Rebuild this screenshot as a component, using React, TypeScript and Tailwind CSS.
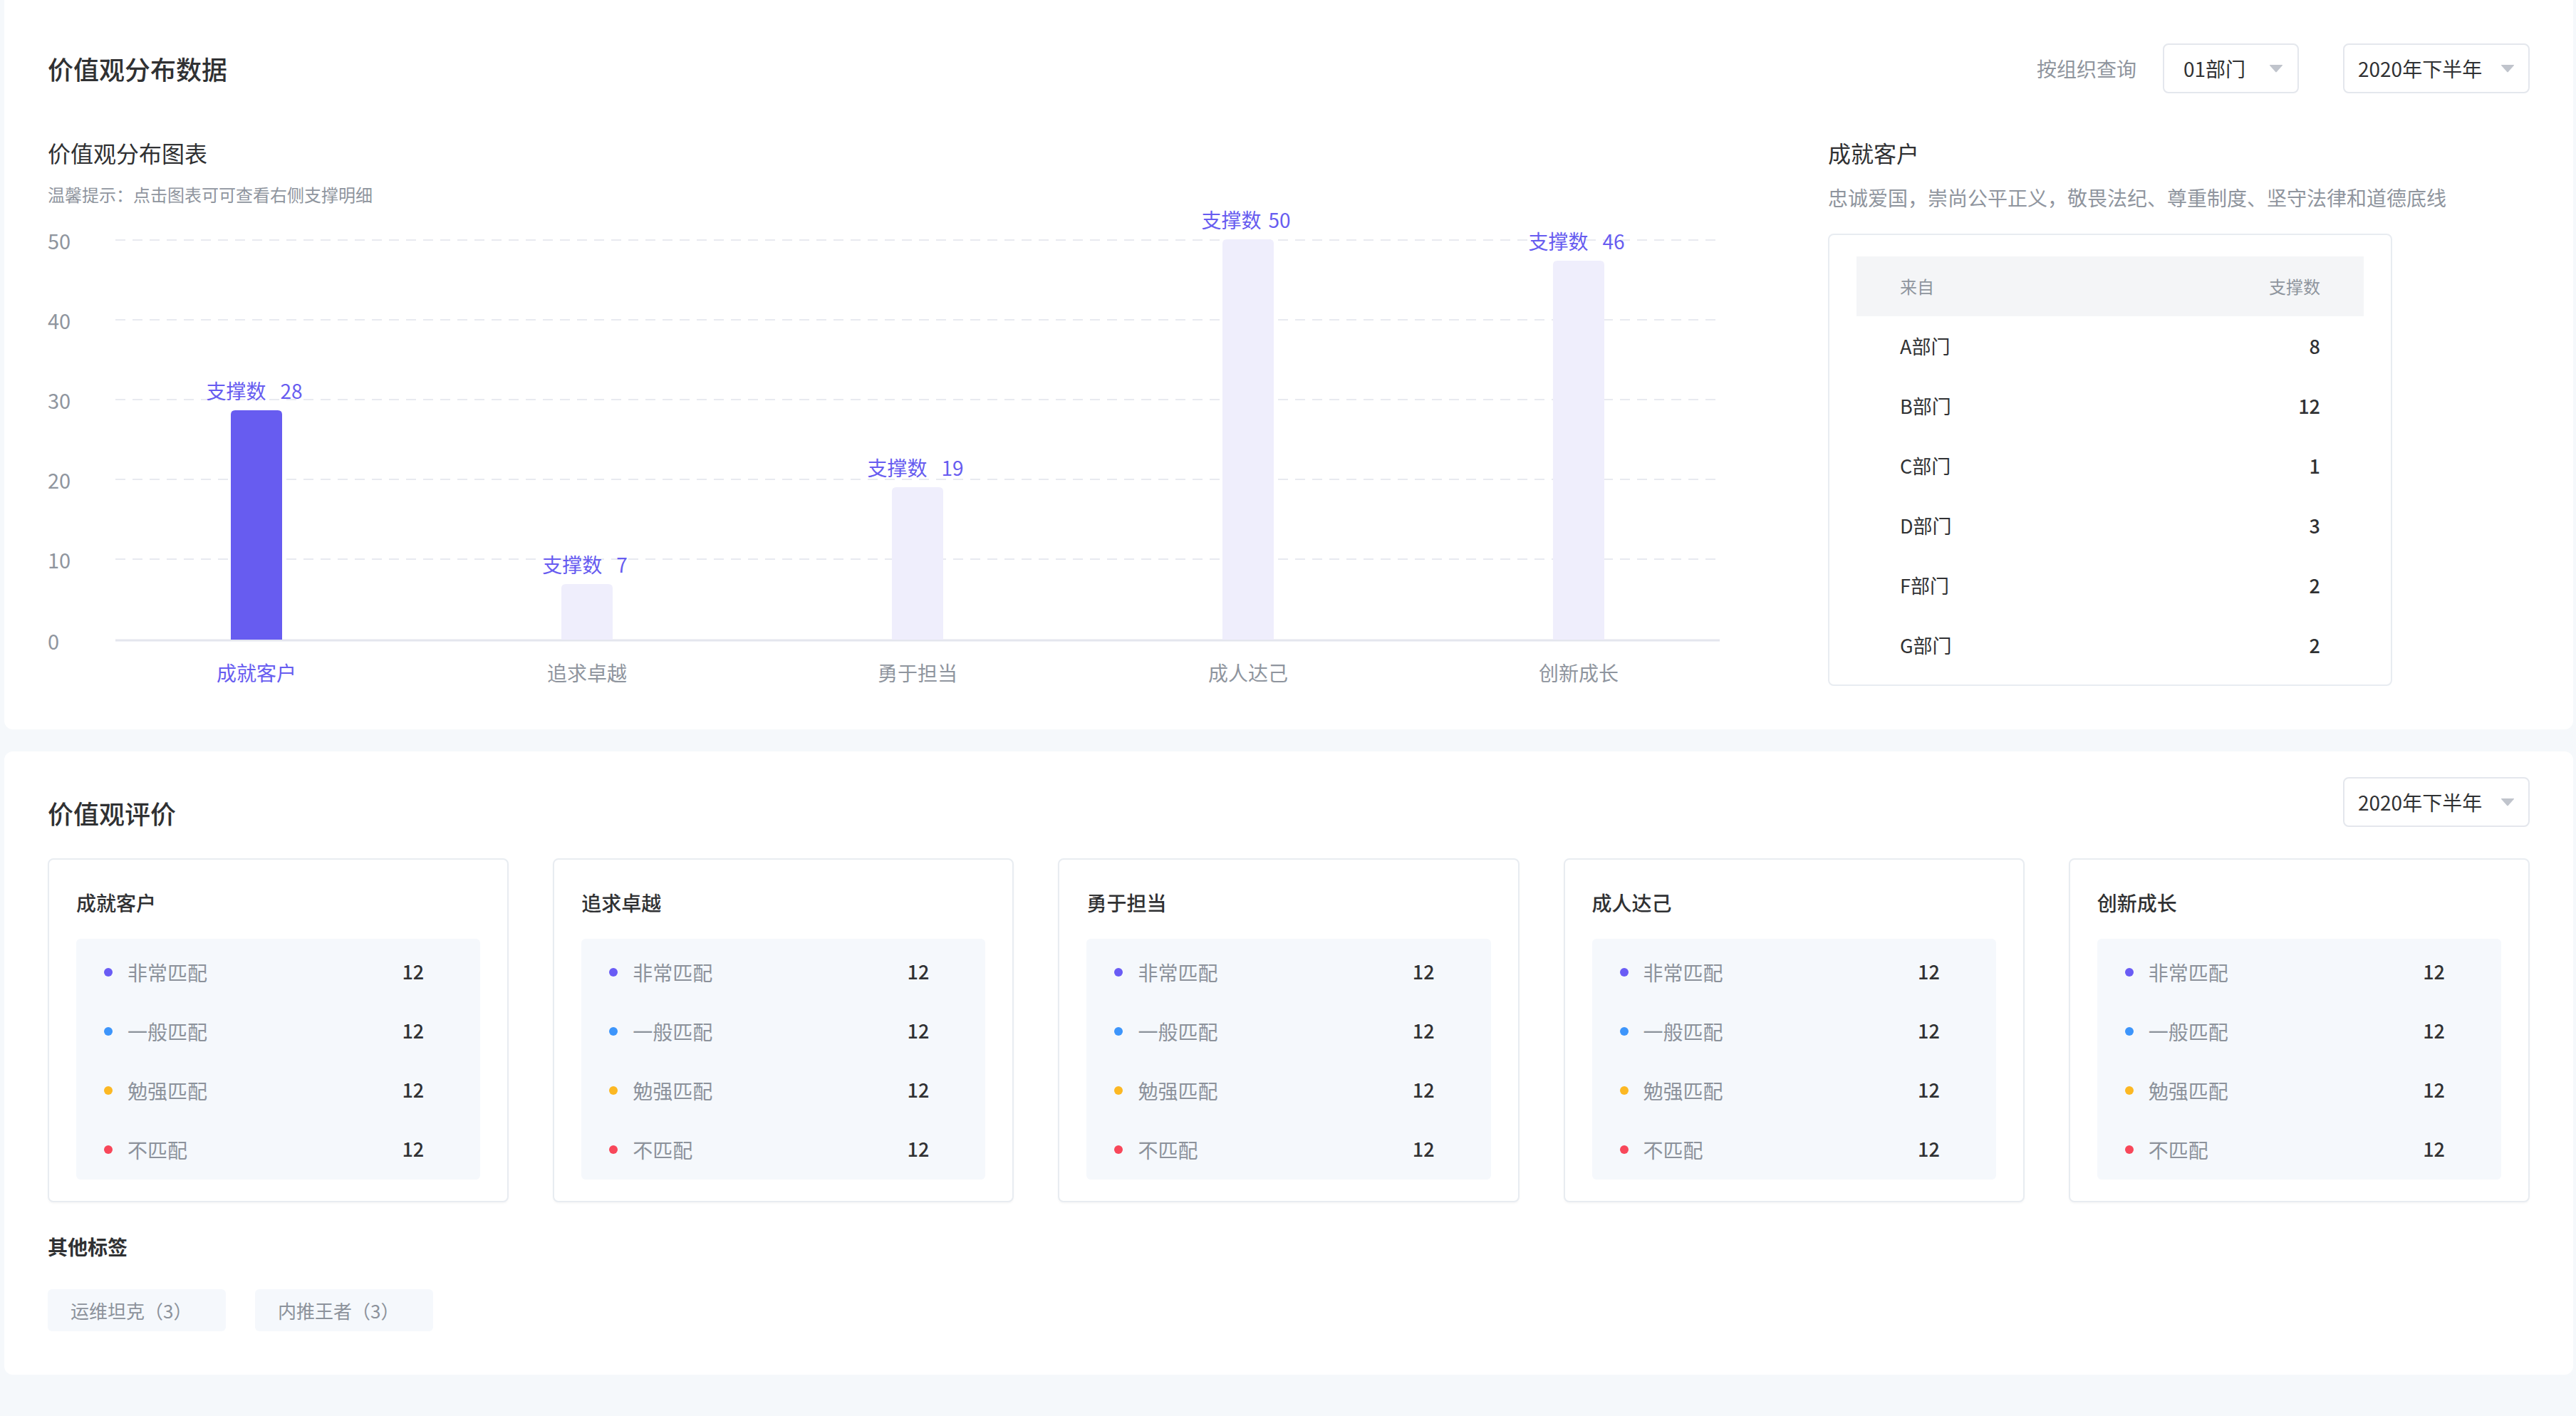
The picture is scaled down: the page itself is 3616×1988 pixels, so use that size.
import React from 'react';

const bars = [
  { name: '成就客户', value: 28, top: 576, active: true, gap: 20 },
  { name: '追求卓越', value: 7, top: 820, active: false, gap: 20 },
  { name: '勇于担当', value: 19, top: 684, active: false, gap: 20 },
  { name: '成人达己', value: 50, top: 336, active: false, gap: 10 },
  { name: '创新成长', value: 46, top: 366, active: false, gap: 20 },
];

const support = [
  { from: 'A部门', count: 8 },
  { from: 'B部门', count: 12 },
  { from: 'C部门', count: 1 },
  { from: 'D部门', count: 3 },
  { from: 'F部门', count: 2 },
  { from: 'G部门', count: 2 },
];

const levels = [
  { label: '非常匹配', color: 'bg-[#6a5cf5]' },
  { label: '一般匹配', color: 'bg-[#3d95fb]' },
  { label: '勉强匹配', color: 'bg-[#fcb823]' },
  { label: '不匹配', color: 'bg-[#f8475a]' },
];

const Caret = () => (
  <svg width="20" height="12" viewBox="0 0 20 12">
    <path d="M1.5 1 L18.5 1 Q19.5 1 18.8 2 L10.8 11 Q10 11.8 9.2 11 L1.2 2 Q0.5 1 1.5 1 Z" fill="#c0c4cc" />
  </svg>
);

const Select = ({ value, className }: { value: string; className: string }) => (
  <div className={`h-[70px] border-2 border-[#e4e7ed] rounded-lg flex items-center justify-between bg-white ${className}`}>
    <span className="text-[28px] text-[#303133] leading-none">{value}</span>
    <Caret />
  </div>
);

// chart drawn in page coordinates, shifted by the svg's own offset
const Chart = () => {
  const ox = 67;
  const oy = 289;
  const grid = [50, 40, 30, 20, 10];
  const centers = [360, 824, 1288, 1752, 2216];
  return (
    <svg width="2360" height="674" className="block">
      {grid.map((g, i) => (
        <g key={g}>
          <text x={0} y={337 + i * 112 - oy} dominantBaseline="central" fontSize="29" fill="#8f959e">
            {g}
          </text>
          <line x1={162 - ox} x2={2412 - ox} y1={337 + i * 112 - oy} y2={337 + i * 112 - oy} stroke="#e8eaf0" strokeWidth="2" strokeDasharray="14 10" />
        </g>
      ))}
      <text x={0} y={899 - oy} dominantBaseline="central" fontSize="29" fill="#8f959e">0</text>
      <line x1={162 - ox} x2={2414 - ox} y1={899 - oy} y2={899 - oy} stroke="#e4e6ee" strokeWidth="3" />
      {bars.map((b, i) => {
        const cx = centers[i] - ox;
        const top = b.top - oy;
        const bottom = 898 - oy;
        const w = 72;
        const r = 6;
        return (
          <g key={b.name}>
            <path
              d={`M${cx - w / 2} ${bottom} L${cx - w / 2} ${top + r} Q${cx - w / 2} ${top} ${cx - w / 2 + r} ${top} L${cx + w / 2 - r} ${top} Q${cx + w / 2} ${top} ${cx + w / 2} ${top + r} L${cx + w / 2} ${bottom} Z`}
              fill={b.active ? '#675cf0' : '#efeefc'}
            />
            <text x={cx - 3} y={top - 28} textAnchor="middle" dominantBaseline="central" fontSize="28" fill="#675cf0">
              <tspan>支撑数</tspan>
              <tspan dx={b.gap}>{b.value}</tspan>
            </text>
            <text x={cx} y={944 - oy} textAnchor="middle" dominantBaseline="central" fontSize="28" fill={b.active ? '#675cf0' : '#8f959e'}>
              {b.name}
            </text>
          </g>
        );
      })}
    </svg>
  );
};

const EvalCard = ({ title }: { title: string }) => (
  <div className="border-2 border-[#e8ecf1] rounded-lg px-[38px] pt-[40px] pb-[30px] bg-white shadow-[0_2px_3px_rgba(0,0,0,0.03)]">
    <div className="text-[28px] leading-[40px] text-[#303133] font-medium">{title}</div>
    <div className="mt-[31px] bg-[#f5f8fc] rounded-md pt-[5px] pb-[1px]">
      {levels.map((l) => (
        <div key={l.label} className="h-[83px] flex items-center justify-between pl-[39px] pr-[79px]">
          <div className="flex items-center">
            <span className={`w-[12px] h-[12px] rounded-full ${l.color}`} />
            <span className="ml-[21px] text-[28px] text-[#8c929b]">{l.label}</span>
          </div>
          <span className="text-[27px] text-[#303133] font-medium">12</span>
        </div>
      ))}
    </div>
  </div>
);

export default function App() {
  return (
    <div className="w-[3616px] min-h-screen bg-[#f5f8fb] pl-[6px] pr-[4px] pb-[60px] font-['Noto_Sans_CJK_SC',sans-serif]">
      <div className="bg-white rounded-b-xl px-[61px] pt-[61px] pb-[61px]">
        <div className="h-[70px] flex items-center justify-between">
          <div className="text-[36px] leading-[48px] text-[#303133] font-medium">价值观分布数据</div>
          <div className="flex items-center">
            <span className="text-[28px] text-[#8f959e] mr-[37px]">按组织查询</span>
            <Select value="01部门" className="w-[191px] pl-[27px] pr-[20px]" />
            <Select value="2020年下半年" className="w-[262px] pl-[19px] pr-[19px] ml-[62px]" />
          </div>
        </div>
        <div className="flex">
          <div className="flex-1">
            <div className="mt-[63px] text-[32px] leading-[40px] text-[#303133]">价值观分布图表</div>
            <div className="mt-[23px] text-[24px] leading-[32px] text-[#8f959e]">温馨提示：点击图表可可查看右侧支撑明细</div>
            <Chart />
          </div>
          <div className="w-[985px]">
            <div className="mt-[63px] text-[32px] leading-[40px] text-[#303133]">成就客户</div>
            <div className="mt-[25px] text-[28px] leading-[36px] text-[#8f959e]">忠诚爱国，崇尚公平正义，敬畏法纪、尊重制度、坚守法律和道德底线</div>
            <div className="mt-[33px] w-[792px] border-2 border-[#e8ecf1] rounded-lg px-[38px] pt-[30px] pb-[13px]">
              <div className="h-[84px] bg-[#f4f5f7] flex items-center justify-between px-[61px] text-[24px] text-[#8f959e]">
                <span>来自</span>
                <span>支撑数</span>
              </div>
              {support.map((s) => (
                <div key={s.from} className="h-[84px] flex items-center justify-between px-[61px] text-[27px] text-[#303133]">
                  <span>{s.from}</span>
                  <span className="font-medium">{s.count}</span>
                </div>
              ))}
            </div>
          </div>
        </div>
      </div>

      <div className="mt-[31px] bg-white rounded-xl px-[61px] pt-[36px] pb-[61px]">
        <div className="h-[70px] flex items-start justify-between">
          <div className="mt-[26px] text-[36px] leading-[48px] text-[#303133] font-medium">价值观评价</div>
          <Select value="2020年下半年" className="w-[262px] pl-[19px] pr-[19px]" />
        </div>
        <div className="mt-[44px] grid grid-cols-5 gap-[62px]">
          {bars.map((b) => (
            <EvalCard key={b.name} title={b.name} />
          ))}
        </div>
        <div className="mt-[42px] text-[28px] leading-[40px] text-[#303133] font-bold">其他标签</div>
        <div className="mt-[40px] flex gap-[41px]">
          {['运维坦克（3）', '内推王者（3）'].map((t) => (
            <div key={t} className="w-[250px] h-[59px] bg-[#f5f8fc] rounded-md flex items-center px-[32px] text-[26px] text-[#8c929b]">
              {t}
            </div>
          ))}
        </div>
      </div>
    </div>
  );
}
